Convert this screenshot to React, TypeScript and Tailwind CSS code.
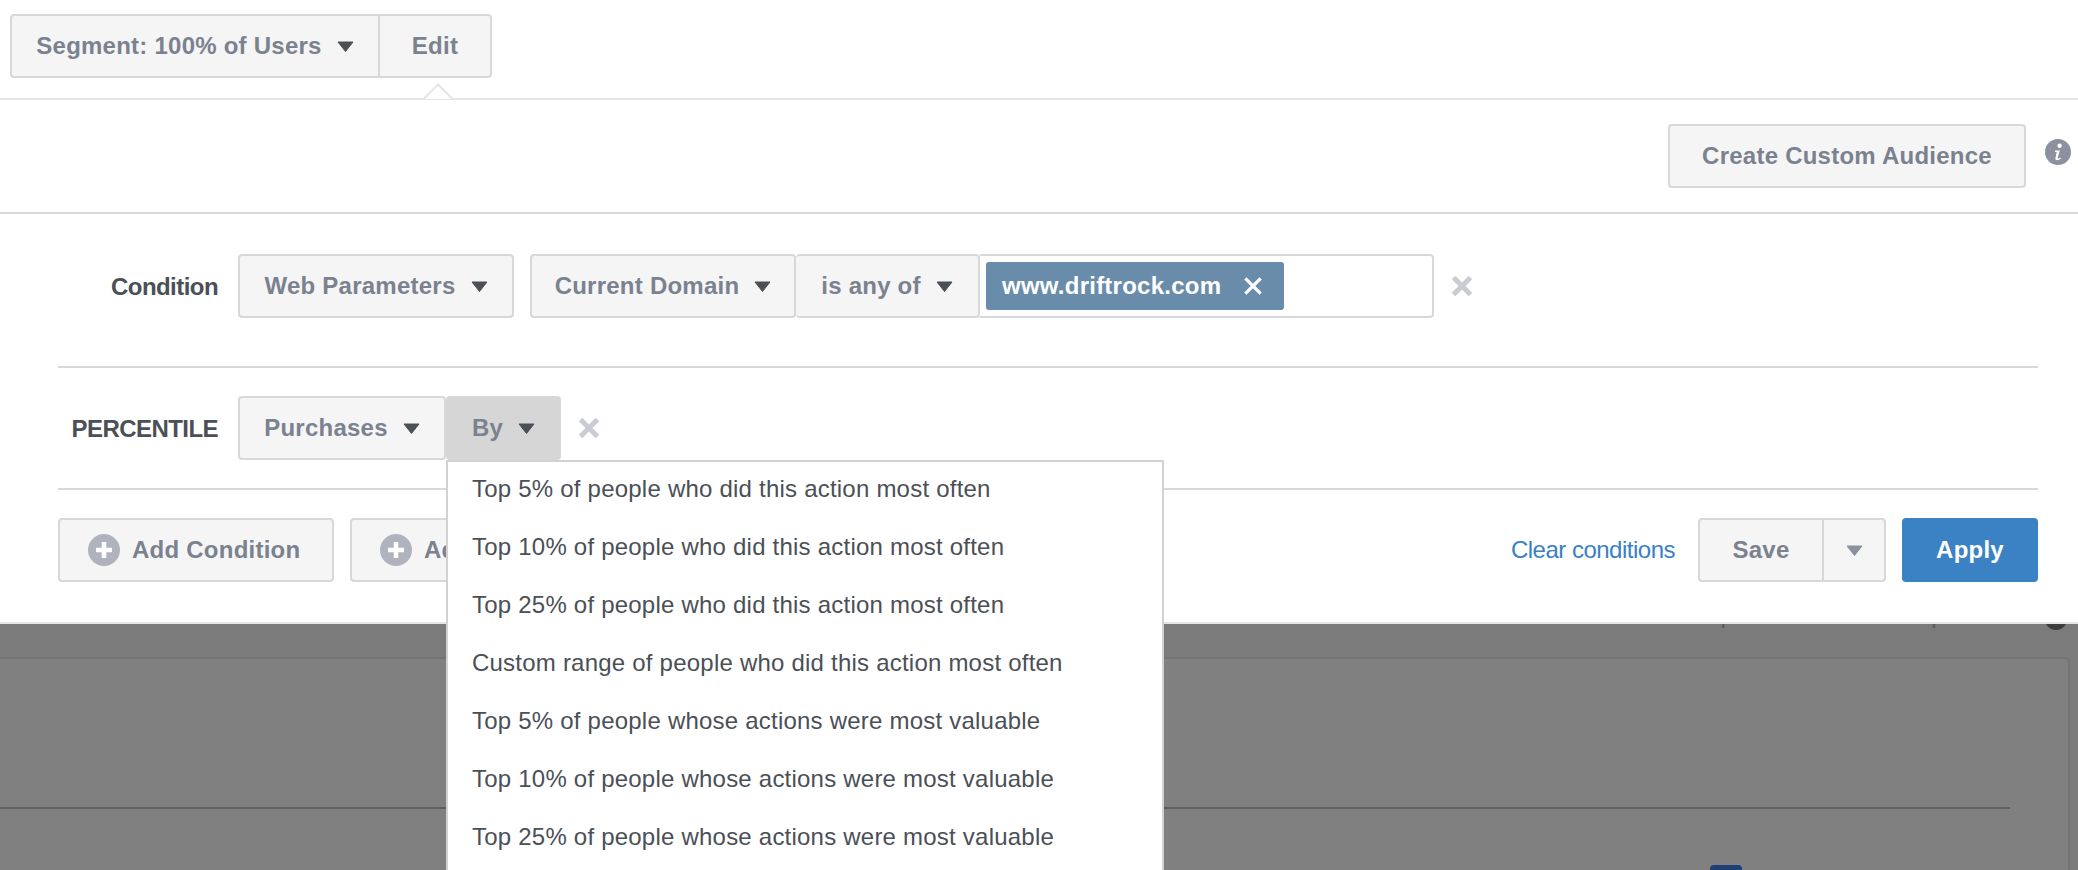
const Caret = ({ color = "#4b4f56" }: { color?: string }) => (
  <svg width="17" height="11" viewBox="0 0 17 11" className="shrink-0">
    <path d="M1 1 H16 L8.5 10.5 Z" fill={color} stroke={color} strokeWidth="1" strokeLinejoin="round" />
  </svg>
);

const Cross = ({ color = "#c9ccd3", size = 20, width = 5 }: { color?: string; size?: number; width?: number }) => (
  <svg width={size} height={size} viewBox="0 0 20 20" className="shrink-0">
    <path d="M1.5 1.5 L18.5 18.5 M18.5 1.5 L1.5 18.5" stroke={color} strokeWidth={width} />
  </svg>
);

const Plus = () => (
  <svg width="32" height="32" viewBox="0 0 32 32" className="shrink-0">
    <circle cx="16" cy="16" r="16" fill="#aeb3be" />
    <path d="M16 8 V24 M8 16 H24" stroke="#fff" strokeWidth="4.5" />
  </svg>
);

const Info = () => (
  <svg width="26" height="26" viewBox="0 0 26 26" className="shrink-0">
    <circle cx="13" cy="13" r="13" fill="#8b919f" />
    <circle cx="14.6" cy="6.8" r="2.2" fill="#fff" />
    <path d="M10.2 11.4 H14.8 L12.8 18.6 C12.6 19.6 13.4 19.8 15.6 18.4 L15.8 19.8 C13.6 21.4 9.8 22 10.4 19 L11.8 13 H10 Z" fill="#fff" />
  </svg>
);

const btn =
  "flex items-center justify-center border-2 border-[#d8d8d8] bg-[#f5f5f5] text-[24px] font-bold tracking-[0.24px] text-[#7a8290] whitespace-nowrap";

const options = [
  "Top 5% of people who did this action most often",
  "Top 10% of people who did this action most often",
  "Top 25% of people who did this action most often",
  "Custom range of people who did this action most often",
  "Top 5% of people whose actions were most valuable",
  "Top 10% of people whose actions were most valuable",
  "Top 25% of people whose actions were most valuable",
];

export default function App() {
  return (
    <div className="relative flex h-[870px] w-[2078px] flex-col overflow-hidden bg-white font-['Liberation_Sans',Arial,sans-serif]">
      {/* segment bar */}
      <div className="relative h-[100px] shrink-0 border-b-2 border-[#e5e5e5] pl-[10px] pt-[14px]">
        <div className="flex h-[64px]">
          <div className={`${btn} w-[370px] gap-[15px] rounded-l-[4px]`}>
            <span>Segment: 100% of Users</span>
            <Caret />
          </div>
          <div className={`${btn} w-[112px] rounded-r-[4px] border-l-0`}>Edit</div>
        </div>
        <svg width="32" height="17" viewBox="0 0 32 17" className="absolute left-[422px] top-[83px]">
          <path d="M0 16 H1.5 L16 1.5 L30.5 16 H32" fill="#fff" stroke="#e5e5e5" strokeWidth="2" />
        </svg>
      </div>

      {/* audience row */}
      <div className="flex h-[114px] shrink-0 items-start border-b-2 border-[#d8d8d8] pl-[1668px] pt-[24px]">
        <div className={`${btn} h-[64px] w-[358px] rounded-[4px]`}>Create Custom Audience</div>
        <div className="ml-[19px] mt-[15px]">
          <Info />
        </div>
      </div>

      {/* conditions */}
      <div className="shrink-0 border-b-2 border-[#e5e5e5] pb-[40px] pl-[58px] pr-[40px]">
        <div className="mt-[40px] flex h-[64px] items-center">
          <div className="mt-[2px] w-[160px] text-right text-[24px] font-bold tracking-[-0.55px] text-[#4b4f56]">Condition</div>
          <div className={`${btn} ml-[20px] h-full w-[276px] gap-[15px] rounded-[4px]`}>
            <span>Web Parameters</span>
            <Caret />
          </div>
          <div className={`${btn} ml-[16px] h-full w-[266px] gap-[15px] rounded-[4px]`}>
            <span>Current Domain</span>
            <Caret />
          </div>
          <div className={`${btn} h-full w-[184px] gap-[15px] rounded-[4px] border-l-0`}>
            <span>is any of</span>
            <Caret />
          </div>
          <div className="flex h-full w-[454px] items-center rounded-r-[4px] border-2 border-l-0 border-[#d8d8d8] bg-white pl-[6px]">
            <div className="flex h-[48px] w-[298px] items-center gap-[23px] rounded-[3px] bg-[#6a8cab] pl-[16px] text-[24px] font-bold tracking-[0.24px] text-white">
              <span>www.driftrock.com</span>
              <Cross color="#fff" size={18} width={3.6} />
            </div>
          </div>
          <div className="ml-[18px]">
            <Cross />
          </div>
        </div>

        <div className="mt-[48px] border-t-2 border-[#d8d8d8] pt-[28px]">
          <div className="flex h-[64px] items-center">
            <div className="mt-[2px] w-[160px] text-right text-[24px] font-bold tracking-[-0.55px] text-[#4b4f56]">PERCENTILE</div>
            <div className={`${btn} ml-[20px] h-full w-[208px] gap-[15px] rounded-[4px]`}>
              <span>Purchases</span>
              <Caret />
            </div>
            <div className="flex h-full w-[115px] items-center justify-center gap-[15px] rounded-[4px] bg-[#d6d6d6] text-[24px] font-bold tracking-[0.24px] text-[#7a8290]">
              <span>By</span>
              <Caret />
            </div>
            <div className="ml-[18px]">
              <Cross />
            </div>
          </div>
        </div>

        <div className="mt-[28px] flex h-[94px] items-start border-t-2 border-[#d8d8d8] pt-[28px]">
          <div className="flex h-[64px] w-full items-center">
            <div className={`${btn} h-full w-[276px] justify-start gap-[12px] rounded-[4px] pl-[28px]`}>
              <Plus />
              <span>Add Condition</span>
            </div>
            <div className={`${btn} ml-[16px] h-full w-[276px] justify-start gap-[12px] rounded-[4px] pl-[28px]`}>
              <Plus />
              <span>Add Breakdown</span>
            </div>
            <a className="ml-auto text-[24px] tracking-[-0.5px] text-[#3a80c4]">Clear conditions</a>
            <div className="ml-[23px] flex h-full">
              <div className={`${btn} h-full w-[126px] rounded-l-[4px]`}>Save</div>
              <div className={`${btn} h-full w-[62px] rounded-r-[4px] border-l-0`}>
                <Caret color="#8b919f" />
              </div>
            </div>
            <div className="ml-[16px] flex h-full w-[136px] items-center justify-center rounded-[4px] bg-[#3b82c4] text-[24px] font-bold tracking-[0.24px] text-white">
              Apply
            </div>
          </div>
        </div>
      </div>

      {/* dimmed page behind */}
      <div className="relative flex-1 overflow-hidden bg-[#7b7b7b]">
        <div className="-mt-[23px] flex h-[34px] items-start justify-end pr-[46px] text-[24px] leading-[28px] tracking-[0.24px] text-[#5a5a5a]">
          <span>Shape based on 100% purchase</span>
        </div>
        <div className="absolute -top-[16px] left-[2045px] h-[22px] w-[22px] rounded-full bg-[#3d3d3d]" />
        <div className="mt-[22px] h-[300px] w-[2070px] rounded-tr-[6px] border-r-2 border-t-2 border-[#747474] bg-[#808080]">
          <div className="h-[150px] w-[2010px] border-b-2 border-[#5f5f5f]" />
          <div className="ml-[1710px] mt-[56px] h-[20px] w-[32px] rounded-t-[4px] bg-[#1f3f75]" />
        </div>
      </div>

      {/* open menu */}
      <div className="absolute left-[446px] top-[460px] h-[420px] w-[718px] border-2 border-[#d2d2d2] bg-white">
        {options.map((o) => (
          <div key={o} className="flex h-[58px] items-center pb-[4px] pl-[24px] text-[24px] tracking-[0.22px] text-[#4b4f56] whitespace-nowrap">
            {o}
          </div>
        ))}
      </div>
    </div>
  );
}
